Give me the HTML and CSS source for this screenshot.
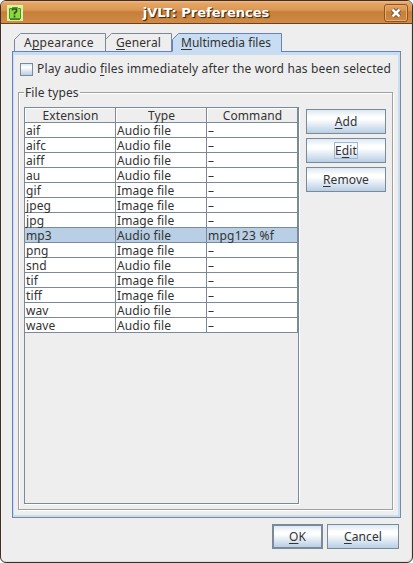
FILE: index.html
```
<!DOCTYPE html>
<html lang="en">
<head>
<meta charset="utf-8">
<title>jVLT: Preferences</title>
<link rel="stylesheet" href="styles.css">
</head>
<body>
<div class="window">
  <header class="titlebar">
    <svg class="app-icon" width="16" height="16" viewBox="0 0 16 16">
      <rect width="16" height="16" fill="#d5f3a0"/>
      <path d="M2.5 3.5h2l1-1h5l1 1h2v10h-11z" fill="#8dd93c" stroke="#55932a"/>
      <path d="M3 14.5h10" stroke="#427c1e"/>
      <path d="M5.500 5.500V4H9.500V6.500L7.500 8V9.500M7.500 10.500v2" fill="none" stroke="#294d18" stroke-width="1.600"/>
    </svg>
    <h1>jVLT: Preferences</h1>
    <div class="close">
      <svg width="12" height="12" viewBox="0 0 12 12">
        <path d="M2.500 2.500l7 7M9.500 2.500l-7 7" stroke="#70451e" stroke-width="4.400"/>
        <path d="M2.500 2.500l7 7M9.500 2.500l-7 7" stroke="#fff" stroke-width="2.500"/>
      </svg>
    </div>
  </header>
  <main>
    <nav class="tabs">
      <div class="tab appearance"><svg width="92" height="18"><path d="M.5 18V6.500L6.500 .5H91.500V18" fill="#eee" stroke="#7a8a99"/></svg><span>A<u>p</u>pearance</span></div>
      <div class="tab general"><svg width="67" height="18"><path d="M.5 6.500L6.500 .5H66.500V18" fill="none" stroke="#7a8a99"/></svg><span><u>G</u>eneral</span></div>
      <div class="tab media"><svg width="110" height="22"><path d="M.5 22V6.500L6.500 .5H109.500V22z" fill="#c8ddf2"/><path d="M.5 18V6.500L6.500 .5H109.500V19" fill="none" stroke="#6382bf"/></svg><span><u>M</u>ultimedia files</span></div>
    </nav>
    <section class="panel">
      <label class="check"><i></i><span>Play audio <u>f</u>iles immediately after the word has been selected</span></label>
      <section class="group">
        <h2><span>File types</span></h2>
        <div class="scroll">
          <div class="grid head"><b><span>Extension</span></b><b><span>Type</span></b><b><span>Command</span></b></div>
          <div class="grid"><span>aif</span><span>Audio file</span><span>–</span></div>
          <div class="grid"><span>aifc</span><span>Audio file</span><span>–</span></div>
          <div class="grid"><span>aiff</span><span>Audio file</span><span>–</span></div>
          <div class="grid"><span>au</span><span>Audio file</span><span>–</span></div>
          <div class="grid"><span>gif</span><span>Image file</span><span>–</span></div>
          <div class="grid"><span>jpeg</span><span>Image file</span><span>–</span></div>
          <div class="grid"><span>jpg</span><span>Image file</span><span>–</span></div>
          <div class="grid selected"><span>mp3</span><span>Audio file</span><span class="command">mpg123 %f</span></div>
          <div class="grid"><span>png</span><span>Image file</span><span>–</span></div>
          <div class="grid"><span>snd</span><span>Audio file</span><span>–</span></div>
          <div class="grid"><span>tif</span><span>Image file</span><span>–</span></div>
          <div class="grid"><span>tiff</span><span>Image file</span><span>–</span></div>
          <div class="grid"><span>wav</span><span>Audio file</span><span>–</span></div>
          <div class="grid"><span>wave</span><span>Audio file</span><span>–</span></div>
        </div>
        <div class="actions">
          <button><span><u>A</u>dd</span></button>
          <button><span class="focus">E<u>d</u>it</span></button>
          <button><span><u>R</u>emove</span></button>
        </div>
      </section>
    </section>
    <footer>
      <button class="ok"><span><u>O</u>K</span></button>
      <button class="cancel"><span><u>C</u>ancel</span></button>
    </footer>
  </main>
</div>
</body>
</html>
```
FILE: styles.css
```
* { box-sizing: border-box; }
html { background: #fff; }
body { margin: 0; font: 12px/14px "Noto Sans", sans-serif; letter-spacing: .1px; color: #333; }
u { text-decoration: underline; text-decoration-thickness: 1px; text-underline-offset: 2px; text-decoration-skip-ink: none; }
.window { width: 413px; height: 563px; border: 1px solid #3b302d; border-radius: 6px; background: #eee; overflow: hidden; box-shadow: inset -1px -1px #e5dbd2, inset 1px 0 #f6efea; }
.titlebar { height: 23px; display: flex; align-items: flex-start; padding: 4px 4px 0 6px; border-bottom: 1px solid #70401c; background: linear-gradient(#f3bd87 0, #e6a566 2px, #dc9751 9px, #c67f39 11px, #d08b46 100%); }
.app-icon { display: block; flex: none; }
h1 { flex: 1; margin: 0; padding-left: 5px; text-align: center; font: bold 13px/16px "DejaVu Sans", sans-serif; letter-spacing: 0; color: #fff; text-shadow: 1px 1px 1px #4d2c10, 1px 1px #6d4118; }
.close { flex: none; width: 24px; height: 18px; margin-top: -1px; display: flex; justify-content: center; align-items: center; border: 1px solid #8b5524; border-radius: 3px; box-shadow: inset 0 0 0 1px #e7ad72; }
main { padding: 9px 11px 0; }
.tabs { display: flex; height: 18px; padding-left: 2px; }
.tab { position: relative; height: 18px; }
.tab svg { position: absolute; left: 0; top: 0; }
.tab span { position: relative; display: block; line-height: 20px; white-space: nowrap; }
.appearance { width: 91px; padding-left: 10px; letter-spacing: .25px; }
.general { width: 67px; padding-left: 11px; }
.media { width: 110px; padding-left: 9px; z-index: 1; letter-spacing: 0; }
.panel { width: 389px; height: 467px; padding: 7px 4px 0 6px; border: 1px solid #7a8a99; border-left-color: #6382bf; border-top-color: #6382bf; box-shadow: inset 1px 3px #c8ddf2, inset -2px -2px #c8ddf2; }
.check { display: flex; align-items: center; height: 21px; padding-left: 1px; white-space: nowrap; letter-spacing: .15px; }
.check span { position: relative; top: -1px; }
.check i { flex: none; width: 13px; height: 13px; margin-right: 4px; border: 1px solid #7a8a99; background: linear-gradient(#dce8f3, #fff 30%, #b8cfe5); }
.group { width: 375px; height: 418px; margin: 12px 0 0 -1px; border: 1px solid #a0a0a0; box-shadow: 1px 1px #fff, inset 1px 1px #fff; display: grid; grid-template-columns: 275px 80px; grid-template-rows: 14px 397px; column-gap: 7px; padding-left: 5px; }
h2 { grid-column: 1 / -1; justify-self: start; width: 56px; height: 14px; margin: -7px 0 0; padding-left: 1px; background: #eee; font: inherit; white-space: nowrap; }
.scroll { border: 1px solid #7a8a99; box-shadow: 1px 1px #fff; }
.grid { display: grid; grid-template-columns: repeat(3, 91px); height: 15px; background: #fff; }
.grid > * { height: 15px; padding-left: 1px; border: solid #7a8a99; border-width: 0 1px 1px 0; white-space: nowrap; line-height: 15px; }
.grid > b { background: #eee; font-weight: 400; text-align: center; box-shadow: inset 1px 1px #fff; line-height: 16px; }
.selected > * { background: #b8cfe5; }
.grid > .command { letter-spacing: .25px; }
.actions { display: flex; flex-direction: column; gap: 4px; padding-top: 2px; }
button { height: 25px; padding: 0; border: 1px solid #7a8a99; display: flex; align-items: center; justify-content: center; font: inherit; letter-spacing: inherit; color: inherit; background: linear-gradient(#dde8f3 0, #fff 30%, #fff 40%, #b8cfe5 100%); }
.focus { width: 24px; height: 17px; border: 1px solid #a3b8cc; line-height: 15px; }
footer { display: flex; justify-content: flex-end; gap: 4px; padding: 6px 2px 0 0; }
.ok { width: 51px; border-width: 2px; }
.cancel { width: 72px; }
```
